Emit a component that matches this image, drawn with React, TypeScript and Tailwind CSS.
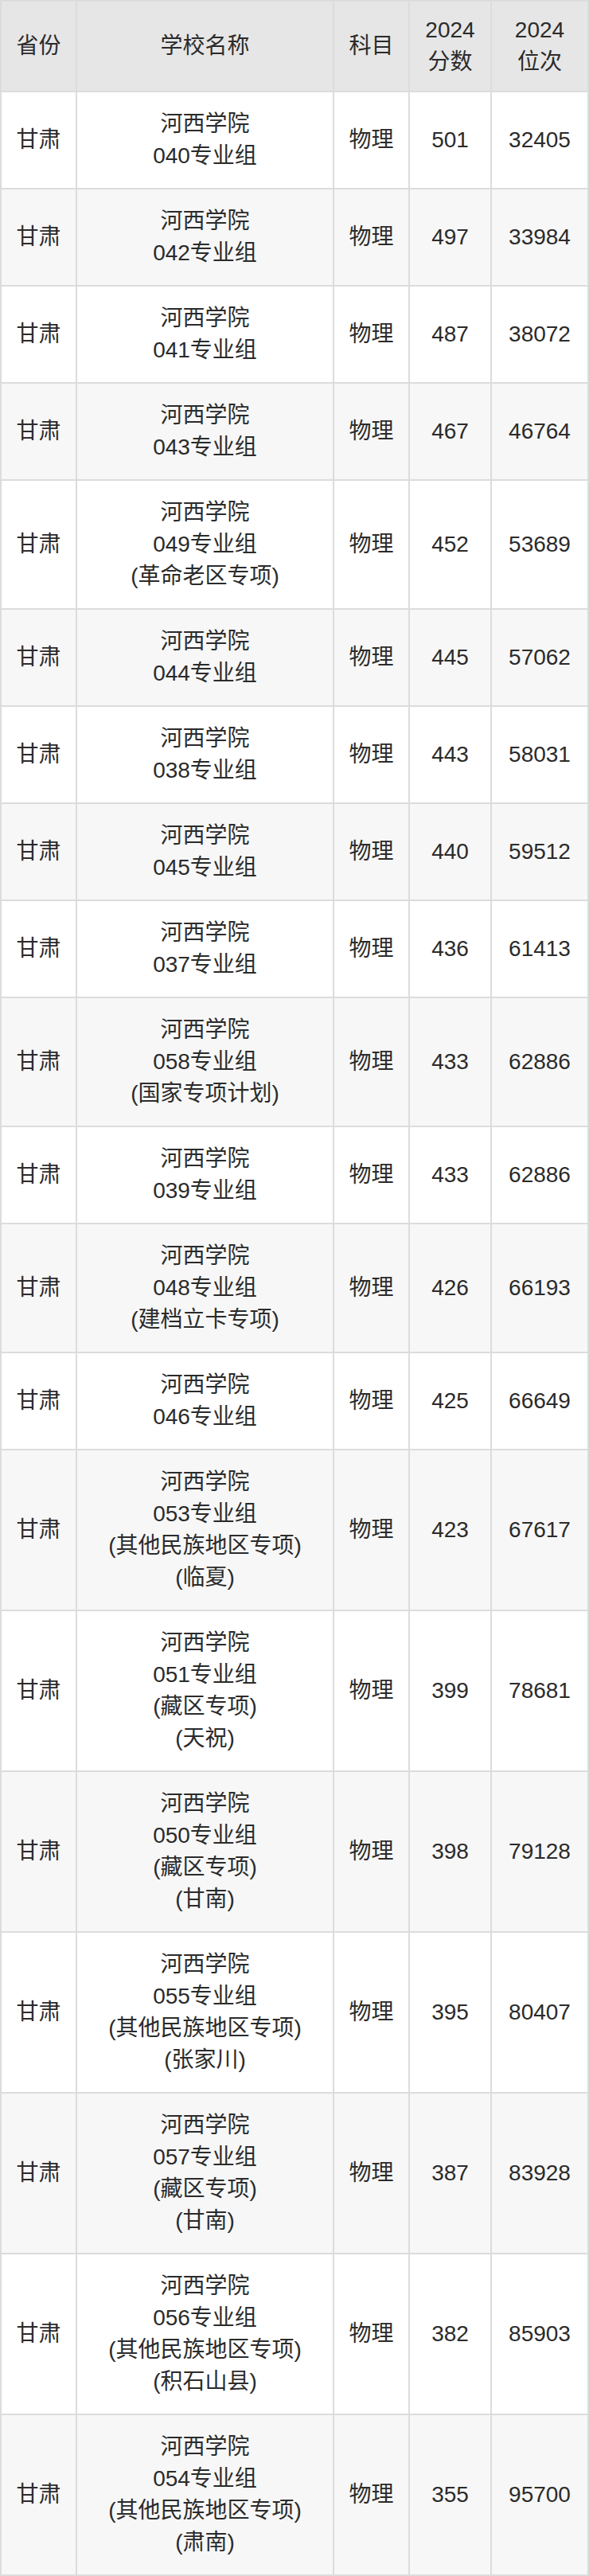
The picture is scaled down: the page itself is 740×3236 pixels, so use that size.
import * as React from "react";

type Row = {
  name: string[];
  score: number;
  rank: number;
};

const rows: Row[] = [
  { name: ["河西学院", "040专业组"], score: 501, rank: 32405 },
  { name: ["河西学院", "042专业组"], score: 497, rank: 33984 },
  { name: ["河西学院", "041专业组"], score: 487, rank: 38072 },
  { name: ["河西学院", "043专业组"], score: 467, rank: 46764 },
  { name: ["河西学院", "049专业组", "(革命老区专项)"], score: 452, rank: 53689 },
  { name: ["河西学院", "044专业组"], score: 445, rank: 57062 },
  { name: ["河西学院", "038专业组"], score: 443, rank: 58031 },
  { name: ["河西学院", "045专业组"], score: 440, rank: 59512 },
  { name: ["河西学院", "037专业组"], score: 436, rank: 61413 },
  { name: ["河西学院", "058专业组", "(国家专项计划)"], score: 433, rank: 62886 },
  { name: ["河西学院", "039专业组"], score: 433, rank: 62886 },
  { name: ["河西学院", "048专业组", "(建档立卡专项)"], score: 426, rank: 66193 },
  { name: ["河西学院", "046专业组"], score: 425, rank: 66649 },
  { name: ["河西学院", "053专业组", "(其他民族地区专项)", "(临夏)"], score: 423, rank: 67617 },
  { name: ["河西学院", "051专业组", "(藏区专项)", "(天祝)"], score: 399, rank: 78681 },
  { name: ["河西学院", "050专业组", "(藏区专项)", "(甘南)"], score: 398, rank: 79128 },
  { name: ["河西学院", "055专业组", "(其他民族地区专项)", "(张家川)"], score: 395, rank: 80407 },
  { name: ["河西学院", "057专业组", "(藏区专项)", "(甘南)"], score: 387, rank: 83928 },
  { name: ["河西学院", "056专业组", "(其他民族地区专项)", "(积石山县)"], score: 382, rank: 85903 },
  { name: ["河西学院", "054专业组", "(其他民族地区专项)", "(肃南)"], score: 355, rank: 95700 },
];

const cols = "grid grid-cols-[93px_321px_93px_101px_120px] gap-[2px]";
const cell = "flex flex-col items-center justify-center text-center";

export default function App() {
  return (
    <div
      className="w-[740px] bg-[#dcdcdc] p-[2px] flex flex-col gap-[2px] text-[28px] leading-[40px] text-[#2b2b2b]"
      style={{ fontFamily: '"Liberation Sans", "Noto Sans CJK SC", sans-serif' }}
    >
      <div className={cols}>
        <div className={`${cell} bg-[#e6e6e6] py-4`}>省份</div>
        <div className={`${cell} bg-[#e6e6e6] py-4`}>学校名称</div>
        <div className={`${cell} bg-[#e6e6e6] py-4`}>科目</div>
        <div className={`${cell} bg-[#e6e6e6] py-4`}>
          <span>2024</span>
          <span>分数</span>
        </div>
        <div className={`${cell} bg-[#e6e6e6] py-4`}>
          <span>2024</span>
          <span>位次</span>
        </div>
      </div>

      {rows.map((row, index) => {
        const bg = index % 2 === 0 ? "bg-white" : "bg-[#f7f7f7]";
        return (
          <div key={index} className={cols}>
            <div className={`${cell} ${bg} py-5`}>甘肃</div>
            <div className={`${cell} ${bg} py-5`}>
              {row.name.map((line, i) => (
                <span key={i}>{line}</span>
              ))}
            </div>
            <div className={`${cell} ${bg} py-5`}>物理</div>
            <div className={`${cell} ${bg} py-5`}>{row.score}</div>
            <div className={`${cell} ${bg} py-5`}>{row.rank}</div>
          </div>
        );
      })}
    </div>
  );
}
